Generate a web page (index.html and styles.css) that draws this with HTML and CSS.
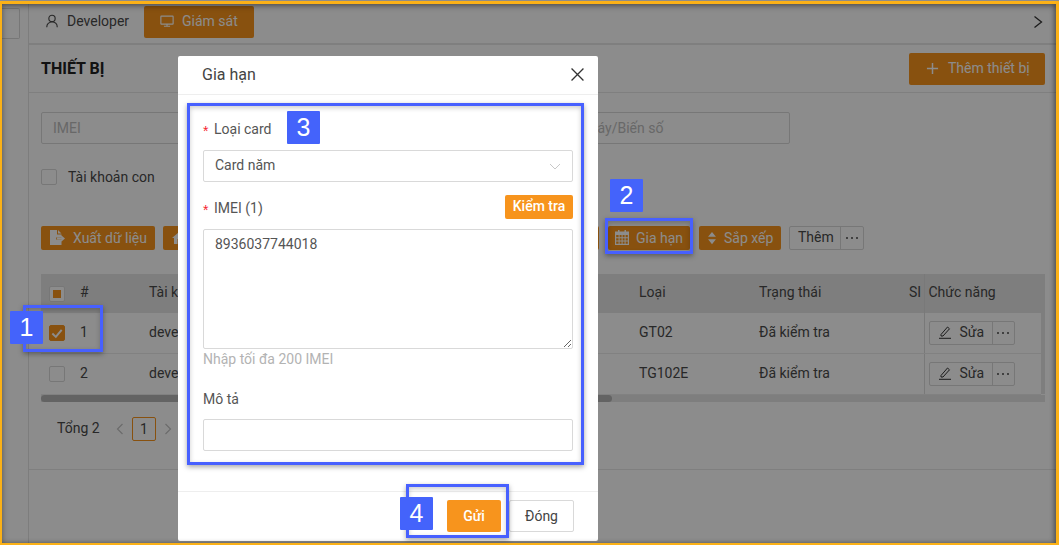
FILE: index.html
```html
<!DOCTYPE html>
<html>
	<head>
		<meta charset="UTF-8">
		<title>Gia hạn</title>
		<link rel="stylesheet" href="styles.css">
	</head>
	<body>
		<div class="shot">

			<!-- trang phía sau -->
			<div class="page">
				<div class="side">
					<div class="side-box"></div>
				</div>
				<div class="main">
					<div class="tabs">
						<a class="tab">
							<svg class="ico" viewBox="0 0 16 16"><circle cx="8" cy="5" r="3.6"/><path d="M2 15c0-3.6 2.6-5.8 6-5.8s6 2.2 6 5.8"/></svg>
							Developer
						</a>
						<a class="tab tab-on">
							<svg class="ico" viewBox="0 0 16 16"><rect x="1" y="2.5" width="14" height="9" rx="0.5"/><path d="M8 11.5v2.5M4.5 14h7"/></svg>
							Giám sát
						</a>
						<svg class="tab-next" viewBox="0 0 10 14"><path d="M1.5 1.5l7 5.5-7 5.5"/></svg>
					</div>

					<div class="title-bar">
						<h2 class="title">THIẾT BỊ</h2>
						<a class="btn btn-add">
							<svg class="ico" viewBox="0 0 14 14"><path d="M7 1v12M1 7h12"/></svg>
							Thêm thiết bị
						</a>
					</div>

					<div class="content">
						<div class="filters">
							<div class="field field-grow">IMEI</div>
							<div class="field field-plate">Tên máy/Biến số</div>
						</div>
						<label class="sub-check"><span class="check"></span>Tài khoản con</label>

						<div class="toolbar">
							<a class="btn btn-export">
								<svg class="ico-solid" viewBox="0 0 16 16"><path d="M1 0h7v4.500h4.500v3H7v2h5.500V15H1zM9 0l3.500 3.500H9zM7.800 7.800h4.700V5.500l3.500 3-3.500 3V9.200H7.800z"/></svg>
								Xuất dữ liệu
							</a>
							<a class="btn btn-wide">
								<svg class="ico-solid" viewBox="0 0 16 16"><path d="M8 2L1 8h2v6h10V8h2zM6.500 9h3v5h-3z"/></svg>
							</a>
							<a class="btn btn-renew">
								<svg class="ico-solid ico-cal" viewBox="0 0 14 15"><path d="M3 0h1.500v1.500h5V0H11v1.500h3V15H0V1.500h3zM1.200 5v2.200h2.400V5zM4.600 5v2.200h2V5zM7.600 5v2.200h2V5zM10.600 5v2.200h2.200V5zM1.200 8.200v2.200h2.400V8.200zM4.600 8.200v2.200h2V8.200zM7.600 8.200v2.200h2V8.200zM10.600 8.200v2.200h2.200V8.200zM1.200 11.400v2.400h2.400v-2.400zM4.600 11.400v2.400h2v-2.400zM7.600 11.400v2.400h2v-2.400zM10.600 11.400v2.400h2.200v-2.400z" fill-rule="evenodd"/></svg>
								Gia hạn
							</a>
							<a class="btn btn-sort">
								<svg class="ico-solid ico-sort" viewBox="0 0 10 16"><path d="M5 1l4.500 5.500h-9zM5 15L.5 9.500h9z"/></svg>
								Sắp xếp
							</a>
							<div class="group">
								<a class="group-btn group-label">Thêm</a>
								<a class="group-btn group-more"><svg class="dots" viewBox="0 0 12 2"><circle cx="1" cy="1" r="1"/><circle cx="6" cy="1" r="1"/><circle cx="11" cy="1" r="1"/></svg></a>
							</div>
						</div>

						<table class="grid">
							<colgroup>
								<col class="c-check"><col class="c-no"><col class="c-user">
								<col class="c-type"><col class="c-state"><col class="c-sim">
								<col class="c-act"><col class="c-gutter">
							</colgroup>
							<thead>
								<tr>
									<th class="cell-check"><span class="check check-some"></span></th>
									<th>#</th>
									<th>Tài khoản</th>
									<th>Loại</th>
									<th>Trạng thái</th>
									<th>SI</th>
									<th class="cell-act">Chức năng</th>
									<th></th>
								</tr>
							</thead>
							<tbody>
								<tr>
									<td class="cell-check"><span class="check check-on"><svg viewBox="0 0 12 12"><path d="M2 6.500l3 2.800 5-6"/></svg></span></td>
									<td>1</td>
									<td>developer</td>
									<td>GT02</td>
									<td>Đã kiểm tra</td>
									<td></td>
									<td class="cell-act">
										<div class="group">
											<a class="group-btn group-edit">
												<svg class="ico-pen" viewBox="0 0 14 14"><path d="M3 9.500L9.500 2l2 1.800L5 11H3zM1 13.300h12"/></svg>
												Sửa
											</a>
											<a class="group-btn group-more group-more-sm"><svg class="dots" viewBox="0 0 12 2"><circle cx="1" cy="1" r="1"/><circle cx="6" cy="1" r="1"/><circle cx="11" cy="1" r="1"/></svg></a>
										</div>
									</td>
									<td class="cell-gutter"></td>
								</tr>
								<tr>
									<td class="cell-check"><span class="check"></span></td>
									<td>2</td>
									<td>developer</td>
									<td>TG102E</td>
									<td>Đã kiểm tra</td>
									<td></td>
									<td class="cell-act">
										<div class="group">
											<a class="group-btn group-edit">
												<svg class="ico-pen" viewBox="0 0 14 14"><path d="M3 9.500L9.500 2l2 1.800L5 11H3zM1 13.300h12"/></svg>
												Sửa
											</a>
											<a class="group-btn group-more group-more-sm"><svg class="dots" viewBox="0 0 12 2"><circle cx="1" cy="1" r="1"/><circle cx="6" cy="1" r="1"/><circle cx="11" cy="1" r="1"/></svg></a>
										</div>
									</td>
									<td class="cell-gutter"></td>
								</tr>
							</tbody>
						</table>
						<div class="scroll"><div class="scroll-thumb"></div></div>

						<div class="pager">
							<span class="pager-total">Tổng 2</span>
							<svg class="pager-arrow" viewBox="0 0 8 12"><path d="M6.500 1L1.500 6l5 5"/></svg>
							<span class="pager-num">1</span>
							<svg class="pager-arrow" viewBox="0 0 8 12"><path d="M1.500 1l5 5-5 5"/></svg>
						</div>
					</div>
				</div>
			</div>

			<div class="mask"></div>

			<!-- hộp thoại -->
			<div class="modal">
				<div class="modal-head">
					<span class="modal-title">Gia hạn</span>
					<svg class="modal-close" viewBox="0 0 12 12"><path d="M.5.500l11 11M11.500.500l-11 11"/></svg>
				</div>
				<div class="modal-body">
					<div class="label"><span class="star">*</span>Loại card</div>
					<div class="select">
						<span class="select-text">Card năm</span>
						<svg class="select-arrow" viewBox="0 0 12 7"><path d="M1 1l5 5 5-5"/></svg>
					</div>
					<div class="label-row">
						<div class="label label-flat"><span class="star">*</span>IMEI (1)</div>
						<a class="check-btn">Kiểm tra</a>
					</div>
					<textarea class="area">8936037744018</textarea>
					<div class="hint">Nhập tối đa 200 IMEI</div>
					<div class="label label-desc">Mô tả</div>
					<input class="input" type="text">
				</div>
				<div class="modal-foot">
					<a class="send">Gửi</a>
					<a class="close">Đóng</a>
				</div>
			</div>

			<!-- đánh dấu các bước -->
			<div class="mark mark-1"></div>
			<div class="mark mark-2"></div>
			<div class="mark mark-3"></div>
			<div class="mark mark-4"></div>
			<div class="step step-1">1</div>
			<div class="step step-2">2</div>
			<div class="step step-3">3</div>
			<div class="step step-4">4</div>

			<div class="edge"></div>
		</div>
	</body>
</html>
```

FILE: styles.css
```css
*{
	margin: 0;
	padding: 0;
	box-sizing: border-box;
}

body{
	font-family: Roboto, "Liberation Sans", sans-serif;
	font-size: 14px;
	color: #4a4a4a;
	background-color: #fff;
}

/*khung ảnh*/
.shot{
	width: 1059px;
	height: 545px;
	position: relative;
	overflow: hidden;
}

.page{
	height: 100%;
	display: flex;
	padding-top: 4px;
}

.side{
	width: 29px;
	flex: none;
	border-right: 1px solid #e4e4e4;
	padding-top: 4px;
}

.side-box{
	width: 20px;
	height: 31px;
	border: 1px solid #d9d9d9;
	border-left: none;
	border-radius: 0 2px 2px 0;
}

.main{
	flex: 1;
	padding-right: 3px;
}

/*tab*/
.tabs{
	height: 41px;
	display: flex;
	align-items: flex-start;
	padding: 2px 0 0;
	border-bottom: 2px solid #e8e8e8;
}

.tab{
	height: 32px;
	display: flex;
	align-items: center;
	gap: 8px;
	padding: 0 15px 2px 16px;
	color: #4a4a4a;
}

.tab-on{
	width: 110px;
	padding-left: 16px;
	color: #fff;
	background-color: #f7941d;
	border-radius: 2px;
}

.ico{
	width: 14px;
	height: 14px;
	fill: none;
	stroke: currentColor;
	stroke-width: 1.3;
	flex: none;
}

.tab-next{
	width: 10px;
	height: 14px;
	fill: none;
	stroke: #333;
	stroke-width: 1.3;
	margin: 9px 13px 0 auto;
}

.title-bar{
	height: 48px;
	display: flex;
	align-items: center;
	justify-content: space-between;
	padding: 0 11px 0 12px;
	border-bottom: 1px solid #e8e8e8;
}

.title{
	font-size: 16px;
	font-weight: 700;
	color: #222;
}

.btn{
	height: 24px;
	display: flex;
	align-items: center;
	gap: 7px;
	padding: 0 8px 1px;
	color: #fff;
	background-color: #f7941d;
	border-radius: 2px;
	white-space: nowrap;
}

.btn-add{
	width: 136px;
	height: 32px;
	gap: 9px;
	padding-left: 17px;
}

.btn-add .ico{
	width: 13px;
	height: 13px;
	stroke-width: 1.6;
}

.btn-export{
	width: 114px;
	flex: none;
	gap: 8px;
}

.btn-wide{
	flex: 1;
}

.btn-renew{
	width: 82px;
	flex: none;
	padding-left: 7px;
	margin-left: 1px;
}

.btn-sort{
	width: 82px;
	flex: none;
	margin-left: 1px;
}

.ico-solid{
	width: 16px;
	height: 16px;
	fill: currentColor;
	flex: none;
}

.ico-cal{
	width: 14px;
	height: 15px;
}

.ico-sort{
	width: 10px;
	height: 14px;
}

.content{
	padding: 0 11px 28px 12px;
	border-bottom: 1px solid #e8e8e8;
	height: 377px;
}

/*bộ lọc*/
.filters{
	display: flex;
	gap: 8px;
	padding-top: 19px;
	padding-right: 255px;
}

.field{
	height: 32px;
	line-height: 30px;
	padding: 0 11px;
	color: #bdbdbd;
	border: 1px solid #d9d9d9;
	border-radius: 2px;
}

.field-grow{
	flex: 1;
}

.field-plate{
	width: 243px;
}

.sub-check{
	display: flex;
	align-items: center;
	gap: 11px;
	margin-top: 25px;
	line-height: 16px;
}

.check{
	width: 16px;
	height: 16px;
	display: block;
	background-color: #fff;
	border: 1px solid #d9d9d9;
	border-radius: 2px;
	position: relative;
}

.check-some:after{
	content: "";
	position: absolute;
	left: 3px;
	top: 3px;
	width: 8px;
	height: 8px;
	background-color: #f7941d;
}

.check-on{
	background-color: #f7941d;
	border-color: #f7941d;
}

.check-on svg{
	width: 14px;
	height: 14px;
	display: block;
	fill: none;
	stroke: #fff;
	stroke-width: 1.700;
}

/*thanh công cụ*/
.toolbar{
	display: flex;
	gap: 8px;
	margin-top: 41px;
	width: 823px;
}

.group{
	display: flex;
	flex: none;
	width: max-content;
	height: 24px;
	border: 1px solid #d9d9d9;
	border-radius: 2px;
	background-color: #fff;
}

.group-btn{
	display: flex;
	align-items: center;
	padding: 0 8px 2px;
	color: #4a4a4a;
	line-height: 22px;
}

.group-label{
	width: 50px;
}

.group-more{
	width: 23px;
	padding: 0;
	justify-content: center;
	border-left: 1px solid #d9d9d9;
}

.group-more-sm{
	width: 22px;
}

.dots{
	width: 12px;
	height: 2px;
	fill: #4a4a4a;
}

.group-edit{
	width: 62px;
	gap: 8px;
}

.ico-pen{
	width: 14px;
	height: 14px;
	fill: none;
	stroke: #333;
	stroke-width: 1;
	flex: none;
}

/*bảng*/
.grid{
	width: 1004px;
	margin-top: 24px;
	table-layout: fixed;
	border-collapse: collapse;
}

.c-check{ width: 31px; }
.c-no{ width: 69px; }
.c-user{ width: 490px; }
.c-type{ width: 120px; }
.c-state{ width: 150px; }
.c-sim{ width: 23px; }
.c-act{ width: 117px; }
.c-gutter{ width: 4px; }

.grid th,
.grid td{
	text-align: left;
	font-weight: 400;
	padding: 0 0 2px 8px;
	white-space: nowrap;
	overflow: hidden;
}

.grid th{
	height: 39px;
	padding-bottom: 4px;
	background-color: #e6e6e6;
}

.grid td{
	height: 40.500px;
	border-bottom: 1px solid #ececec;
	background-color: #fff;
}

.grid .cell-check{
	padding: 0 0 0 8px;
}

.grid .cell-act{
	padding-left: 4px;
	border-left: 1px solid #dcdcdc;
}

.grid td.cell-act{
	padding-bottom: 0;
}

.grid .cell-gutter{
	padding: 0;
	background-color: #e6e6e6;
	border-bottom: none;
}

.scroll{
	width: 1004px;
	height: 7px;
	background-color: #e6e6e6;
}

.scroll-thumb{
	width: 571px;
	height: 100%;
	background-color: #b4b4b4;
	border-radius: 4px;
}

/*phân trang*/
.pager{
	display: flex;
	align-items: center;
	margin-top: 15px;
	padding-left: 16px;
}

.pager-total{
	width: 59px;
	padding-bottom: 2px;
}

.pager-arrow{
	width: 8px;
	height: 12px;
	fill: none;
	stroke: #c4c4c4;
	stroke-width: 1.200;
}

.pager-num{
	width: 24px;
	height: 24px;
	margin: 0 8px;
	text-align: center;
	line-height: 22px;
	border: 1px solid #f7941d;
	border-radius: 2px;
}

.mask{
	position: absolute;
	top: 0;
	left: 0;
	right: 0;
	bottom: 0;
	background-color: rgba(0, 0, 0, .45);
}

/*hộp thoại*/
.modal{
	position: absolute;
	left: 178px;
	top: 56px;
	width: 420px;
	height: 485px;
	display: flex;
	flex-direction: column;
	background-color: #fff;
	border-radius: 2px;
}

.modal-head{
	height: 39px;
	flex: none;
	display: flex;
	align-items: center;
	justify-content: space-between;
	padding: 0 14px 2px 24px;
	border-bottom: 1px solid #eee;
}

.modal-title{
	font-size: 16px;
	color: #444;
}

.modal-close{
	width: 13px;
	height: 13px;
	fill: none;
	stroke: #333;
	stroke-width: 1.200;
}

.modal-body{
	flex: 1;
	padding: 23px 25px 0;
}

.label{
	height: 22px;
	line-height: 22px;
	margin-bottom: 10px;
	color: #555;
}

.label-flat{
	margin-bottom: 0;
	padding-top: 2px;
	height: 24px;
}

.label-desc{
	margin-bottom: 9px;
}

.star{
	display: inline-block;
	width: 11px;
	color: #f5222d;
	font-family: "Liberation Sans", sans-serif;
	vertical-align: -2px;
}

.select{
	height: 32px;
	display: flex;
	align-items: center;
	justify-content: space-between;
	padding: 0 11px;
	border: 1px solid #d9d9d9;
	border-radius: 2px;
	color: #555;
}

.select-text{
	padding-bottom: 2px;
}

.select-arrow{
	width: 12px;
	height: 7px;
	fill: none;
	stroke: #c8c8c8;
	stroke-width: 1;
}

.label-row{
	display: flex;
	align-items: center;
	justify-content: space-between;
	height: 24px;
	margin: 13px 0 10px;
}

.check-btn{
	width: 68px;
	height: 24px;
	line-height: 22px;
	text-align: center;
	color: #fff;
	font-weight: 500;
	background-color: #f7941d;
	border-radius: 2px;
}

.area{
	display: block;
	width: 100%;
	height: 120px;
	padding: 3px 11px;
	font-family: inherit;
	font-size: 14px;
	line-height: 22px;
	color: #555;
	border: 1px solid #d9d9d9;
	border-radius: 2px;
	outline: none;
}

.hint{
	height: 20px;
	line-height: 20px;
	margin-bottom: 19px;
	color: #b3b3b3;
}

.input{
	display: block;
	width: 100%;
	height: 32px;
	border: 1px solid #d9d9d9;
	border-radius: 2px;
	outline: none;
}

.modal-foot{
	height: 50px;
	flex: none;
	display: flex;
	justify-content: flex-end;
	gap: 8px;
	padding: 8px 24px 0 0;
	border-top: 1px solid #eee;
}

.send,
.close{
	height: 32px;
	line-height: 30px;
	text-align: center;
	border-radius: 2px;
}

.send{
	width: 54px;
	line-height: 32px;
	color: #fff;
	font-weight: 500;
	background-color: #f7941d;
}

.close{
	width: 65px;
	color: #444;
	border: 1px solid #d9d9d9;
}

/*khung đánh dấu*/
.mark{
	position: absolute;
	border: 3px solid #4760ff;
	box-shadow: 0 2px 5px rgba(0, 0, 0, .35), inset 0 2px 5px rgba(0, 0, 0, .2);
}

.mark-1{ left: 23px; top: 305px; width: 80px; height: 47px; }
.mark-2{ left: 605px; top: 218px; width: 88px; height: 36px; }
.mark-3{ left: 187px; top: 103px; width: 397px; height: 362px; }
.mark-4{ left: 406px; top: 484px; width: 103px; height: 54px; }

.step{
	position: absolute;
	width: 33px;
	height: 33px;
	line-height: 33px;
	text-align: center;
	font-family: "Liberation Sans", sans-serif;
	font-size: 25px;
	color: #fff;
	background-color: #4463fb;
	border-radius: 1px;
}

.step-1{ left: 10px; top: 311px; }
.step-2{ left: 610px; top: 179px; }
.step-3{ left: 287px; top: 111px; }
.step-4{ left: 400px; top: 497px; }

.edge{
	position: absolute;
	top: 1px;
	left: 0;
	right: 0;
	bottom: 0;
	border: 3px solid #fbb117;
	border-left-width: 2px;
	border-bottom-width: 2px;
	box-shadow: inset 0 2px 6px rgba(0, 0, 0, .35), inset -2px 0 4px rgba(0, 0, 0, .25);
	pointer-events: none;
}
```
